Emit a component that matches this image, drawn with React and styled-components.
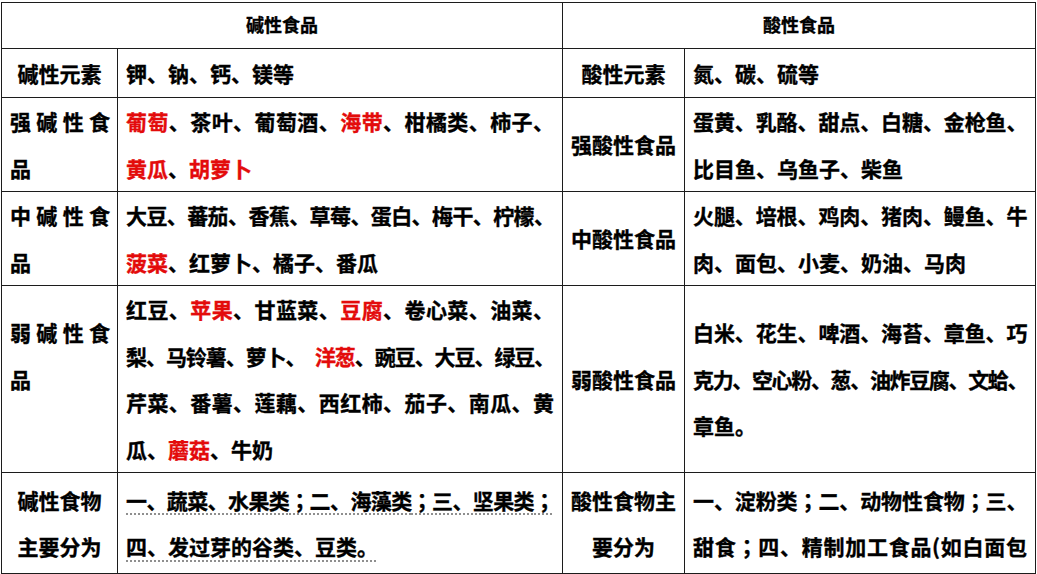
import React from "react";
import styled, { createGlobalStyle } from "styled-components";

const GlobalStyle = createGlobalStyle`
  html, body {
    margin: 0;
    padding: 0;
    background: #fff;
  }
  body {
    font-family: "Noto Sans CJK SC", "Noto Sans", sans-serif;
    font-weight: 700;
    color: #000;
    -webkit-text-stroke: 0.35px currentColor;
  }
`;

const Page = styled.div`
  padding: 2px 0 0 1px;
`;

const Table = styled.div`
  display: grid;
  grid-template-columns: 116px 445px 122px 351px;
  grid-template-rows: 46px 49px 94px 94px 187px 101px;
  width: max-content;
  border-top: 1px solid #1c1c1c;
  border-left: 1px solid #1c1c1c;
`;

const Cell = styled.div`
  box-sizing: border-box;
  display: flex;
  flex-direction: column;
  justify-content: center;
  grid-column: ${(p) => (p.$span ? `span ${p.$span}` : "auto")};
  border-right: 1px solid #1c1c1c;
  border-bottom: 1px solid #1c1c1c;
  font-size: 21px;
  text-align: ${(p) => p.$align || "left"};
  padding: ${(p) => p.$pad || "0"};
`;

const HeadCell = styled(Cell)`
  font-size: 18px;
  text-align: center;
  padding-bottom: 3px;
`;

const Line = styled.div`
  line-height: 46.5px;
  white-space: ${(p) => (p.$full ? "normal" : "nowrap")};
  text-align: ${(p) => (p.$full ? "justify" : "inherit")};
  text-align-last: ${(p) => (p.$full ? "justify" : "auto")};
  letter-spacing: ${(p) => (p.$squeeze ? `${p.$squeeze}px` : "normal")};
`;

const Red = styled.span`
  color: #e30b0b;
`;

/* centred full-width semicolon, as in the source document */
const Semi = styled.span`
  font-family: "Noto Sans CJK TC", "Noto Sans CJK SC", sans-serif;
`;

const Marked = styled.span`
  text-decoration: underline dotted #8f8f8f;
  text-decoration-thickness: 2px;
  text-underline-offset: 5px;
`;

const LABEL_PAD = "0 7px 0 8px";
const TEXT_PAD = "0 8px";

export default function App() {
  return (
    <>
      <GlobalStyle />
      <Page>
        <Table>
          <HeadCell $span={2}>碱性食品</HeadCell>
          <HeadCell $span={2}>酸性食品</HeadCell>

          <Cell $align="center">
            <Line>碱性元素</Line>
          </Cell>
          <Cell $pad={TEXT_PAD}>
            <Line>钾、钠、钙、镁等</Line>
          </Cell>
          <Cell $align="center">
            <Line>酸性元素</Line>
          </Cell>
          <Cell $pad={TEXT_PAD}>
            <Line>氮、碳、硫等</Line>
          </Cell>

          <Cell $pad={LABEL_PAD}>
            <Line $full>强碱性食</Line>
            <Line>品</Line>
          </Cell>
          <Cell $pad={TEXT_PAD}>
            <Line $full>
              <Red>葡萄</Red>、茶叶、葡萄酒、<Red>海带</Red>、柑橘类、柿子、
            </Line>
            <Line>
              <Red>黄瓜</Red>、<Red>胡萝卜</Red>
            </Line>
          </Cell>
          <Cell $align="center">
            <Line>强酸性食品</Line>
          </Cell>
          <Cell $pad={TEXT_PAD}>
            <Line $full $squeeze={-0.5}>
              蛋黄、乳酪、甜点、白糖、金枪鱼、
            </Line>
            <Line>比目鱼、乌鱼子、柴鱼</Line>
          </Cell>

          <Cell $pad={LABEL_PAD}>
            <Line $full>中碱性食</Line>
            <Line>品</Line>
          </Cell>
          <Cell $pad={TEXT_PAD}>
            <Line $full $squeeze={-1}>
              大豆、蕃茄、香蕉、草莓、蛋白、梅干、柠檬、
            </Line>
            <Line>
              <Red>菠菜</Red>、红萝卜、橘子、番瓜
            </Line>
          </Cell>
          <Cell $align="center">
            <Line>中酸性食品</Line>
          </Cell>
          <Cell $pad={TEXT_PAD}>
            <Line $full $squeeze={-0.5}>
              火腿、培根、鸡肉、猪肉、鳗鱼、牛
            </Line>
            <Line>肉、面包、小麦、奶油、马肉</Line>
          </Cell>

          <Cell $pad={LABEL_PAD}>
            <Line $full>弱碱性食</Line>
            <Line>品</Line>
            <Line>&nbsp;</Line>
          </Cell>
          <Cell $pad={TEXT_PAD}>
            <Line $full>
              红豆、<Red>苹果</Red>、甘蓝菜、<Red>豆腐</Red>、卷心菜、油菜、
            </Line>
            <Line $full $squeeze={-1.3}>
              梨、马铃薯、萝卜、{"\u2002"}
              <Red>洋葱</Red>、豌豆、大豆、绿豆、
            </Line>
            <Line $full>芹菜、番薯、莲藕、西红柿、茄子、南瓜、黄</Line>
            <Line>
              瓜、<Red>蘑菇</Red>、牛奶
            </Line>
          </Cell>
          <Cell $align="center">
            <Line>弱酸性食品</Line>
          </Cell>
          <Cell $pad={TEXT_PAD}>
            <Line $full $squeeze={-0.5}>
              白米、花生、啤酒、海苔、章鱼、巧
            </Line>
            <Line $full $squeeze={-1.5}>
              克力、空心粉、葱、油炸豆腐、文蛤、
            </Line>
            <Line>章鱼。</Line>
          </Cell>

          <Cell $align="center">
            <Line>碱性食物</Line>
            <Line>主要分为</Line>
          </Cell>
          <Cell $pad={TEXT_PAD}>
            <Line $full $squeeze={-1}>
              <Marked>
                一、蔬菜、水果类<Semi>；</Semi>二、海藻类<Semi>；</Semi>三、坚果类
                <Semi>；</Semi>
              </Marked>
            </Line>
            <Line>
              <Marked>四、发过芽的谷类、豆类。</Marked>
            </Line>
          </Cell>
          <Cell $align="center">
            <Line>酸性食物主</Line>
            <Line>要分为</Line>
          </Cell>
          <Cell $pad={TEXT_PAD}>
            <Line $full $squeeze={-0.5}>
              一、淀粉类<Semi>；</Semi>二、动物性食物<Semi>；</Semi>三、
            </Line>
            <Line $full>
              甜食<Semi>；</Semi>四、精制加工食品(如白面包
            </Line>
          </Cell>
        </Table>
      </Page>
    </>
  );
}
